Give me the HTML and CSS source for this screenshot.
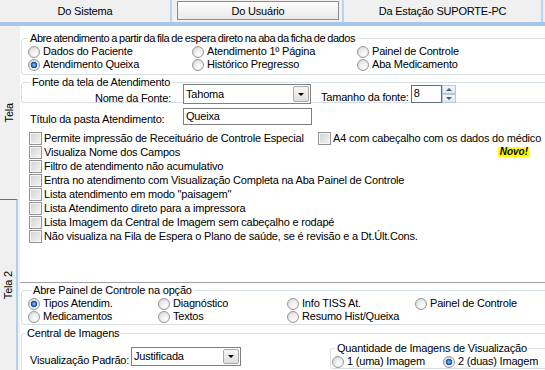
FILE: index.html
```html
<!DOCTYPE html>
<html lang="pt-BR">
<head>
    <meta charset="UTF-8">
    <meta name="viewport" content="width=device-width, initial-scale=1.0">
    <title>Configurações do Usuário</title>
    <link rel="stylesheet" href="styles.css">
</head>
<body>
    <div class="tabs">
        <div class="tab tab-sistema">Do Sistema</div>
        <div class="tab tab-usuario"><div class="face">Do Usuário</div></div>
        <div class="tab tab-estacao">Da Estação SUPORTE-PC</div>
    </div>

    <div class="main">
        <div class="side-tabs">
            <div class="side-tab first"><span>Tela</span></div>
            <div class="side-tab second"><span>Tela 2</span></div>
        </div>

        <div class="content">
            <div class="upper">
                <fieldset class="group g-abre">
                    <legend>Abre atendimento a partir da fila de espera direto na aba da ficha de dados</legend>
                    <div class="radio-grid cols-abre">
                        <label class="opt"><input type="radio" name="aba">Dados do Paciente</label>
                        <label class="opt"><input type="radio" name="aba">Atendimento 1º Página</label>
                        <label class="opt"><input type="radio" name="aba">Painel de Controle</label>
                        <label class="opt"><input type="radio" name="aba" checked>Atendimento Queixa</label>
                        <label class="opt"><input type="radio" name="aba">Histórico Pregresso</label>
                        <label class="opt"><input type="radio" name="aba">Aba Medicamento</label>
                    </div>
                </fieldset>

                <fieldset class="group g-fonte">
                    <legend>Fonte da tela de Atendimento</legend>
                    <div class="font-row">
                        <span class="lbl-nome">Nome da Fonte:</span>
                        <div class="combo combo-fonte"><span>Tahoma</span><i class="drop"></i></div>
                        <span class="lbl-tam">Tamanho da fonte:</span>
                        <div class="spin">
                            <div class="spin-field">8</div>
                            <div class="spin-btns"><b class="up"></b><b class="down"></b></div>
                        </div>
                    </div>
                </fieldset>

                <div class="title-row">
                    <span class="lbl-titulo">Título da pasta Atendimento:</span>
                    <div class="edit">Queixa</div>
                </div>

                <div class="checks">
                    <div class="check-row">
                        <label class="check check-wide"><input type="checkbox">Permite impressão de Receituário de Controle Especial</label>
                        <label class="check"><input type="checkbox">A4 com cabeçalho com os dados do médico</label>
                    </div>
                    <div class="check-row">
                        <label class="check"><input type="checkbox">Visualiza Nome dos Campos</label>
                        <span class="novo">Novo!</span>
                    </div>
                    <div class="check-row"><label class="check"><input type="checkbox">Filtro de atendimento não acumulativo</label></div>
                    <div class="check-row"><label class="check"><input type="checkbox">Entra no atendimento com Visualização Completa na Aba Painel de Controle</label></div>
                    <div class="check-row"><label class="check"><input type="checkbox">Lista atendimento em modo "paisagem"</label></div>
                    <div class="check-row"><label class="check"><input type="checkbox">Lista Atendimento direto para a impressora</label></div>
                    <div class="check-row"><label class="check"><input type="checkbox">Lista Imagem da Central de Imagem sem cabeçalho e rodapé</label></div>
                    <div class="check-row"><label class="check"><input type="checkbox">Não visualiza na Fila de Espera o Plano de saúde, se é revisão e a Dt.Últ.Cons.</label></div>
                </div>
            </div>

            <fieldset class="group g-painel">
                <legend>Abre Painel de Controle na opção</legend>
                <div class="radio-grid cols-painel">
                    <label class="opt"><input type="radio" name="painel" checked>Tipos Atendim.</label>
                    <label class="opt"><input type="radio" name="painel">Diagnóstico</label>
                    <label class="opt"><input type="radio" name="painel">Info TISS At.</label>
                    <label class="opt"><input type="radio" name="painel">Painel de Controle</label>
                    <label class="opt"><input type="radio" name="painel">Medicamentos</label>
                    <label class="opt"><input type="radio" name="painel">Textos</label>
                    <label class="opt"><input type="radio" name="painel">Resumo Hist/Queixa</label>
                </div>
            </fieldset>

            <fieldset class="group g-central">
                <legend>Central de Imagens</legend>
                <div class="central-row">
                    <div class="vis">
                        <span class="lbl-vis">Visualização Padrão:</span>
                        <div class="combo combo-vis"><span>Justificada</span><i class="drop"></i></div>
                    </div>
                    <fieldset class="group g-qtd">
                        <legend>Quantidade de Imagens de Visualização</legend>
                        <div class="radio-grid cols-qtd">
                            <label class="opt"><input type="radio" name="qtd">1 (uma) Imagem</label>
                            <label class="opt"><input type="radio" name="qtd" checked>2 (duas) Imagem</label>
                        </div>
                    </fieldset>
                </div>
            </fieldset>
        </div>
    </div>
</body>
</html>
```

FILE: styles.css
```css
* {
    box-sizing: border-box;
}

body {
    margin: 0;
    width: 545px;
    height: 370px;
    overflow: hidden;
    font-family: "Liberation Sans", Arial, sans-serif;
    font-size: 11px;
    line-height: 13px;
    letter-spacing: -0.2px;
    color: #000;
    background: #fff;
}

/* top tabs */
.tabs {
    display: flex;
    height: 26px;
    background: #f0f0f0;
    border-bottom: 4px solid #a9c6e8;
}

.tab {
    line-height: 22px;
    text-align: center;
    white-space: nowrap;
    border-right: 2px solid #bad3ee;
}

.tab-sistema {
    width: 172px;
}

.tab-usuario {
    width: 172px;
    padding: 1px 3px 2px 5px;
}

.tab-usuario .face {
    height: 19px;
    line-height: 18px;
    border: 1px solid #8c8c8c;
    background: linear-gradient(#fdfdfd, #e9e9e9);
}

.tab-estacao {
    width: 199px;
}

/* body */
.main {
    display: flex;
    height: 344px;
}

.side-tabs {
    width: 20px;
    flex: none;
    display: flex;
    flex-direction: column;
    background: #f0f0f0;
}

.side-tab {
    width: 18px;
    display: flex;
    align-items: center;
    justify-content: center;
}

.side-tab span {
    writing-mode: vertical-rl;
    transform: rotate(180deg);
}

.side-tab.first {
    height: 173px;
}

.side-tab.second {
    flex: 1;
    border-top: 1px solid #6f6f6f;
    border-right: 2px solid #b4cfee;
}

.content {
    flex: 1;
    min-width: 0;
    background: #fff;
}

.upper {
    height: 257px;
    padding-top: 6px;
    border-bottom: 1px solid #a0a0a0;
}

/* group boxes */
.group {
    margin: 0 -4px 0 1px;
    padding: 0 0 3px 6px;
    min-width: 0;
    border: 1px solid #d5dfe5;
    border-radius: 3px;
}

.group legend {
    padding: 0 2px;
    line-height: 13px;
}

.g-abre legend {
    letter-spacing: -0.45px;
    word-spacing: -0.5px;
}

.radio-grid {
    display: grid;
}

.cols-abre {
    grid-template-columns: 164px 165px 1fr;
}

.cols-painel {
    grid-template-columns: 130px 129px 128px 1fr;
}

.cols-qtd {
    grid-template-columns: 111px 1fr;
}

.opt {
    display: flex;
    align-items: center;
    height: 13px;
    white-space: nowrap;
}

.opt input {
    appearance: none;
    flex: none;
    width: 12px;
    height: 12px;
    margin: 0 3px 0 0;
    border: 1px solid #979797;
    border-radius: 50%;
    background: radial-gradient(circle at 65% 70%, #fdfdfd 0, #eeeeee 45%, #cfcfcf 100%);
}

.opt input:checked {
    background:
        radial-gradient(circle at 50% 50%, #9fd0f6 0, #3f86d6 1.5px, #154c9c 3px, rgba(21, 76, 156, 0) 3.6px),
        radial-gradient(circle at 65% 70%, #fdfdfd 0, #eeeeee 45%, #cfcfcf 100%);
}

/* fonte */
.g-fonte {
    margin-top: 1px;
    padding-bottom: 0;
}

.g-fonte legend {
    margin-left: 2px;
}

.font-row {
    display: flex;
    align-items: flex-end;
    height: 20px;
    margin: -5px 0 -2px;
}

.lbl-nome {
    width: 143px;
    text-align: right;
    margin-bottom: -1px;
}

.combo {
    display: flex;
    align-items: center;
    justify-content: space-between;
    padding-left: 2px;
    border: 1px solid #7f7f7f;
    background: #fff;
}

.combo-fonte {
    width: 128px;
    height: 20px;
    margin-left: 12px;
}

.drop {
    display: flex;
    align-items: center;
    justify-content: center;
    width: 16px;
    height: calc(100% - 2px);
    margin-right: 1px;
    border: 1px solid #a9a9a9;
    border-radius: 2px;
    background: linear-gradient(#f7f7f7, #dedede);
}

.drop::after {
    content: "";
    border-left: 3px solid transparent;
    border-right: 3px solid transparent;
    border-top: 3px solid #000;
}

.lbl-tam {
    margin-left: 10px;
    white-space: nowrap;
}

.spin {
    display: flex;
    align-self: flex-start;
    margin: 1px 0 0 2px;
}

.spin-field {
    width: 31px;
    height: 18px;
    padding-left: 2px;
    line-height: 15px;
    border: 1px solid #5f6f86;
    background: #fff;
}

.spin-btns {
    display: flex;
    flex-direction: column;
    width: 14px;
    height: 18px;
}

.spin-btns b {
    flex: 1;
    display: flex;
    align-items: center;
    justify-content: center;
    border: 1px solid #b9c6d6;
    background: linear-gradient(#f4f8fc, #dde7f2);
}

.spin-btns .up::after {
    content: "";
    border-left: 3px solid transparent;
    border-right: 3px solid transparent;
    border-bottom: 3px solid #4a5d78;
}

.spin-btns .down::after {
    content: "";
    border-left: 3px solid transparent;
    border-right: 3px solid transparent;
    border-top: 3px solid #4a5d78;
}

/* titulo */
.title-row {
    display: flex;
    align-items: flex-end;
    margin-top: 5px;
    padding-left: 10px;
}

.lbl-titulo {
    width: 153px;
    margin-bottom: -1px;
}

.edit {
    width: 129px;
    height: 17px;
    padding-left: 2px;
    line-height: 15px;
    border: 1px solid #7f7f7f;
}

/* checkboxes */
.checks {
    margin-top: 6px;
    padding-left: 9px;
}

.check-row {
    display: flex;
    align-items: center;
    height: 14px;
}

.check {
    display: flex;
    align-items: center;
    white-space: nowrap;
}

.check-wide {
    width: 289px;
}

.check input {
    appearance: none;
    flex: none;
    width: 13px;
    height: 13px;
    margin: 0 2px 0 0;
    border: 1px solid #939393;
    background: linear-gradient(135deg, #d2d2d2, #f4f4f4);
    box-shadow: inset 0 0 0 1px #f6f6f6;
}

.novo {
    margin: 0 15px 0 auto;
    padding: 0 2px;
    font-size: 10px;
    line-height: 10px;
    font-weight: bold;
    font-style: italic;
    letter-spacing: 0;
    background: #ffff00;
}

/* painel */
.g-painel {
    margin-top: 1px;
    padding-bottom: 1px;
}

.g-painel legend {
    margin-left: 3px;
}

/* central de imagens */
.g-central {
    margin-top: 2px;
}

.g-central legend {
    margin-left: -3px;
}

.central-row {
    display: flex;
    align-items: flex-start;
}

.vis {
    display: flex;
    align-items: flex-end;
    margin-top: 7px;
    padding-left: 2px;
}

.lbl-vis {
    width: 101px;
    white-space: nowrap;
    margin-bottom: -1px;
}

.combo-vis {
    width: 110px;
    height: 19px;
}

.g-qtd {
    width: 218px;
    margin: 2px 0 0 auto;
    padding: 0 0 0 1px;
}

.g-qtd legend {
    margin-left: 3px;
}
```
